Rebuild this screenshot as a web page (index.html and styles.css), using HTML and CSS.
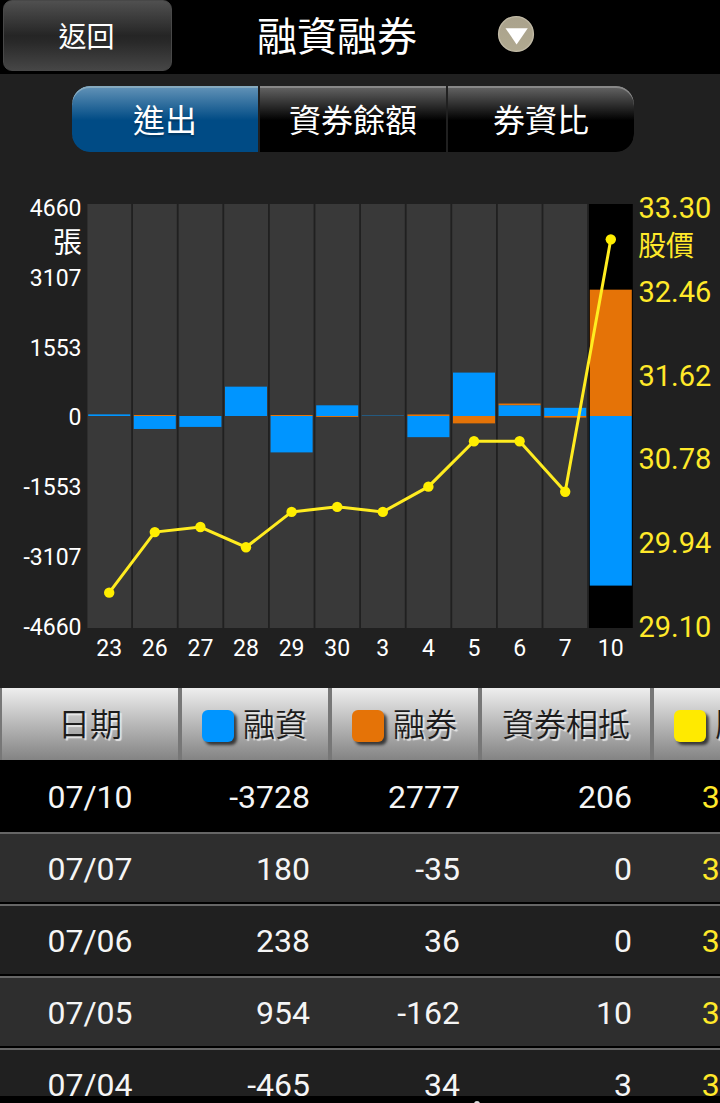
FILE: index.html
```html
<!DOCTYPE html>
<html lang="zh-Hant">
<head>
    <meta charset="UTF-8">
    <meta name="viewport" content="width=device-width, initial-scale=1.0">
    <title>融資融券</title>
    <link rel="stylesheet" href="styles.css">
</head>
<body>

<header class="topbar">
    <button class="back-button">返回</button>
    <h1>融資融券</h1>
    <svg class="dropdown" width="38" height="38" viewBox="0 0 38 38">
        <defs>
            <linearGradient id="knob" x1="0" y1="0" x2="0" y2="1">
                <stop offset="0" stop-color="#aaa28c"/>
                <stop offset="1" stop-color="#b0a990"/>
            </linearGradient>
        </defs>
        <circle cx="19" cy="19" r="17.4" fill="url(#knob)" stroke="#c0b9a5" stroke-width="1.4"/>
        <path d="M8.5 13.2H30.8L19.6 29.5Z" fill="#fff"/>
    </svg>
</header>

<nav class="tabs">
    <button class="tab active">進出</button>
    <button class="tab">資券餘額</button>
    <button class="tab">券資比</button>
</nav>

<svg class="chart" id="chart" width="720" height="536" viewBox="0 152 720 536"></svg>

<div class="table-container">
    <table id="data-table">
        <colgroup>
            <col class="col-date">
            <col class="col-margin">
            <col class="col-short">
            <col class="col-offset">
            <col class="col-price">
        </colgroup>
        <thead>
            <tr>
                <th>日期</th>
                <th><div class="legend"><span class="swatch blue"></span>融資</div></th>
                <th><div class="legend"><span class="swatch orange"></span>融券</div></th>
                <th>資券相抵</th>
                <th><div class="legend"><span class="swatch yellow"></span>股價</div></th>
            </tr>
        </thead>
        <tbody>
            <tr class="selected"><td>07/10</td><td>-3728</td><td>2777</td><td>206</td><td>32.95</td></tr>
            <tr><td>07/07</td><td>180</td><td>-35</td><td>0</td><td>30.45</td></tr>
            <tr><td>07/06</td><td>238</td><td>36</td><td>0</td><td>30.95</td></tr>
            <tr><td>07/05</td><td>954</td><td>-162</td><td>10</td><td>30.95</td></tr>
            <tr><td>07/04</td><td>-465</td><td>34</td><td>3</td><td>30.50</td></tr>
        </tbody>
    </table>
</div>

<footer class="bottom-bar"><span class="handle"></span></footer>

<script src="chart.js"></script>

</body>
</html>
```
FILE: styles.css
```css
body {
    width: 720px;
    height: 1103px;
    margin: 0;
    overflow: hidden;
    display: flex;
    flex-direction: column;
    background-color: #202020;
    color: #fff;
    font-family: Roboto, "Noto Sans CJK TC", sans-serif;
}
button {
    padding: 0;
    border: none;
    color: #fff;
    font-family: inherit;
}
.topbar {
    height: 74px;
    flex-shrink: 0;
    display: flex;
    align-items: flex-start;
    background-color: #000;
}
.back-button {
    width: 169px;
    height: 71px;
    margin-left: 3px;
    padding: 0 2px 2px 0;
    border: 1px solid #484848;
    border-radius: 9px;
    background: linear-gradient(#505050, #252525 50%, #292929 60%, #464646);
    font-size: 28px;
}
h1 {
    margin: 0 0 0 85px;
    font-size: 40px;
    font-weight: 400;
    line-height: 75px;
}
.dropdown {
    margin: 15px 0 0 80px;
}
.tabs {
    width: 562px;
    height: 66px;
    margin: 12px 0 0 72px;
    flex-shrink: 0;
    display: flex;
    gap: 2px;
    border-radius: 18px;
    overflow: hidden;
}
.tab {
    flex: 1;
    padding-bottom: 2px;
    background: linear-gradient(#666, #000 52%);
    box-shadow: inset 0 2px 0 #888;
    font-size: 32px;
}
.tab:first-child {
    border-radius: 18px 0 0 18px;
}
.tab:last-child {
    border-radius: 0 18px 18px 0;
}
.tab.active {
    background: linear-gradient(#6494b8, #004b85 52%);
    box-shadow: inset 0 2px 0 #86aabf;
    text-shadow: 0 2px 2px rgba(0, 0, 0, 0.3);
}
.chart {
    display: block;
    flex-shrink: 0;
}
.axis {
    fill: #fff;
    font-size: 23px;
}
.axis .unit {
    font-size: 29px;
}
.price-axis {
    fill: #ffe92a;
    font-size: 29px;
}
.price-axis .unit {
    font-size: 28px;
}
.band {
    fill: #393939;
}
.band.current {
    fill: #000;
}
.bar-margin {
    fill: #0095ff;
}
.bar-short {
    fill: #e57307;
}
.price-line {
    fill: none;
    stroke: #ffec20;
    stroke-width: 3;
}
.price-dot {
    fill: #ffee00;
}
.table-container {
    height: 408px;
    flex-shrink: 0;
    overflow: hidden;
}
table {
    width: 802px;
    table-layout: fixed;
    border-collapse: separate;
    border-spacing: 0;
}
.col-date {
    width: 180px;
}
.col-margin, .col-short, .col-price {
    width: 150px;
}
.col-offset {
    width: 172px;
}
th, td {
    box-sizing: border-box;
    height: 72px;
    padding: 0;
}
th {
    padding-bottom: 5px;
    border-left: 2px solid #777;
    border-right: 2px solid #777;
    background: linear-gradient(#eee, #838383);
    color: #1c1c1c;
    font-size: 32px;
    font-weight: 350;
    text-shadow: 2px 2px 1px rgba(240, 240, 240, 0.85);
}
.legend {
    display: flex;
    justify-content: center;
    align-items: center;
    gap: 9px;
    padding-right: 1px;
}
.swatch {
    width: 32px;
    height: 32px;
    margin-top: 9px;
    border-radius: 6px;
    box-shadow: 3px 3px 3px rgba(0, 0, 0, 0.65);
}
.blue {
    background-color: #0095ff;
}
.orange {
    background-color: #e57307;
}
.yellow {
    background-color: #ffea00;
}
td {
    padding: 2px 20px 0 0;
    border-top: 2px solid #666;
    border-bottom: 2px solid #000;
    color: #f5f5f5;
    font-size: 32px;
    text-align: right;
    background-color: #202020;
}
td:first-child {
    padding-right: 0;
    text-align: center;
}
td:last-child {
    color: #ffe92a;
}
tr:nth-child(even) td {
    background-color: #2e2e2e;
}
tr.selected td {
    border-color: #000;
    background-color: #000;
}
.bottom-bar {
    height: 7px;
    flex-shrink: 0;
    overflow: hidden;
    background-color: #000;
}
.handle {
    display: block;
    width: 6px;
    height: 6px;
    margin: 5px 0 0 474px;
    border-radius: 50%;
    background-color: #ddd;
}
```
FILE: chart.js
```js
// day, margin change, short change, closing price
const days = [
    ['23', 36, 0, 29.45],
    ['26', -285, 22, 30.05],
    ['27', -240, 0, 30.10],
    ['28', 645, 0, 29.90],
    ['29', -800, 22, 30.25],
    ['30', 235, -20, 30.30],
    ['3', 8, 0, 30.25],
    ['4', -465, 34, 30.50],
    ['5', 954, -162, 30.95],
    ['6', 238, 36, 30.95],
    ['7', 180, -35, 30.45],
    ['10', -3728, 2777, 32.95]
];

const chartTop = 204;
const zero = 416;
const unit = 212 / 4660;
const step = 45.6;
const priceY = price => chartTop + (33.30 - price) / 4.2 * 424;

let svg = '';
let points = '';
let dots = '';

// bars are stacked away from the zero line
days.forEach(([label, margin, short, price], i) => {
    const x = 87.4 + step * i;
    const cx = x + 21.8;
    const last = i === days.length - 1;
    svg += `<rect class="band${last ? ' current' : ''}" x="${x}" y="204" width="43.8" height="424"/>`;

    const drawBar = (value, offset, name) => {
        const h = Math.abs(value) * unit;
        if (!h) return;
        const y = value > 0 ? zero - offset - h : zero + offset;
        svg += `<rect class="${name}" x="${x + .8}" y="${y}" width="42" height="${h}"/>`;
    };
    const sameSide = margin * short > 0;
    drawBar(margin, 0, 'bar-margin');
    drawBar(short, sameSide ? Math.abs(margin) * unit : 0, 'bar-short');

    points += `${cx},${priceY(price)} `;
    dots += `<circle class="price-dot" cx="${cx}" cy="${priceY(price)}" r="5.2"/>`;
    svg += `<text class="axis" x="${cx}" y="656" text-anchor="middle">${label}</text>`;
});
svg += `<polyline class="price-line" points="${points}"/>` + dots;

svg += '<g class="axis" text-anchor="end">';
[4660, 3107, 1553, 0, -1553, -3107, -4660].forEach((value, i) => {
    svg += `<text x="81.5" y="${216 + i * 69.8}">${value}</text>`;
});
svg += '<text class="unit" x="82" y="253">張</text></g>';

svg += '<g class="price-axis">';
['33.30', '32.46', '31.62', '30.78', '29.94', '29.10'].forEach((value, i) => {
    svg += `<text x="638.5" y="${218 + i * 83.8}">${value}</text>`;
});
svg += '<text class="unit" x="638" y="256">股價</text></g>';

document.getElementById('chart').innerHTML = svg;
```
